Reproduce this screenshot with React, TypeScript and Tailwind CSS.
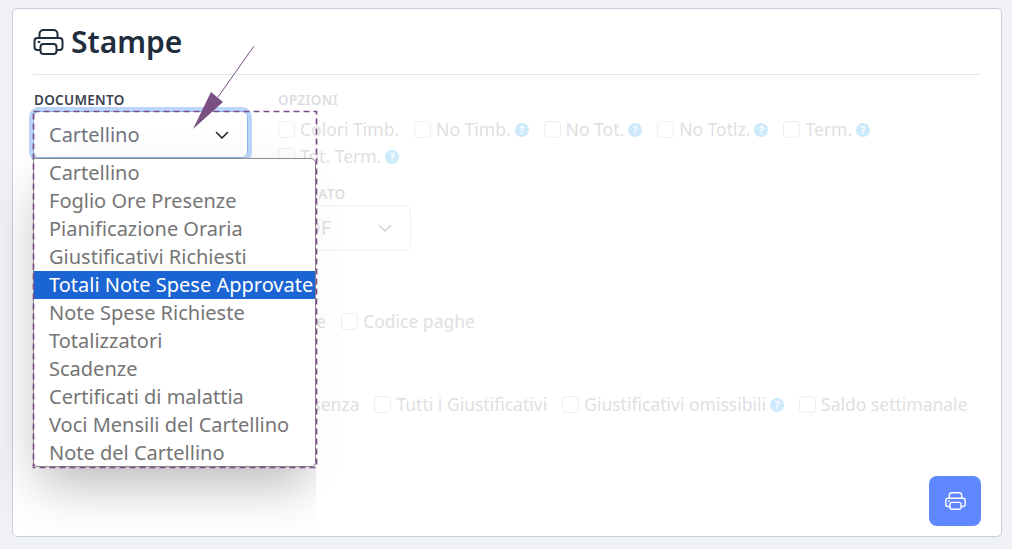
const font = "font-['Noto_Sans',sans-serif]";

const documents = [
  "Cartellino",
  "Foglio Ore Presenze",
  "Pianificazione Oraria",
  "Giustificativi Richiesti",
  "Totali Note Spese Approvate",
  "Note Spese Richieste",
  "Totalizzatori",
  "Scadenze",
  "Certificati di malattia",
  "Voci Mensili del Cartellino",
  "Note del Cartellino",
];

const PrinterIcon = ({ className }: { className: string }) => (
  <svg viewBox="0 0 30 26" fill="none" stroke="currentColor" strokeWidth="2" className={className}>
    <path d="M6 9V5a4 4 0 0 1 4-4h10a4 4 0 0 1 4 4v4" />
    <path d="M7 21H4a3 3 0 0 1-3-3v-6a3 3 0 0 1 3-3h22a3 3 0 0 1 3 3v6a3 3 0 0 1-3 3h-3" />
    <rect x="7" y="15" width="16" height="10" rx="3" />
    <path d="M5 13h1" strokeLinecap="round" />
  </svg>
);

const Chevron = ({ className }: { className: string }) => (
  <svg viewBox="0 0 16 16" fill="none" stroke="currentColor" strokeWidth="1.6" strokeLinecap="round" strokeLinejoin="round" className={className}>
    <path d="M2.5 5.5 8 11l5.5-5.5" />
  </svg>
);

const Help = () => (
  <span className="ml-[4px] flex size-[14px] items-center justify-center rounded-full bg-[#cdeafd] text-[10px] font-bold leading-none text-white">
    ?
  </span>
);

const Check = ({ label, help, className }: { label: string; help?: boolean; className?: string }) => (
  <label className={`flex h-[27px] items-center text-[17.5px] text-[#dfdfe3] ${className ?? ""}`}>
    <span className="mr-[5px] size-[17px] rounded-[4px] border border-[#eeeef1] bg-white" />
    {label}
    {help && <Help />}
  </label>
);

const SectionLabel = ({ children, dim }: { children: string; dim?: boolean }) => (
  <div className={`text-[13.5px] font-semibold uppercase leading-[17px] tracking-[0.3px] ${dim ? "text-[#dedee2]" : "text-[#3b4250]"}`}>
    {children}
  </div>
);

const DocumentDropdown = () => (
  <div className="absolute left-0 top-[66px] z-10 w-[283px] shadow-[0_20px_40px_rgba(0,0,0,0.03)]">
    <ul className="h-[309px] overflow-hidden rounded-b-[5px] rounded-tr-[5px] border border-[#8a8a8a] bg-white shadow-[0_25px_50px_-8px_rgba(0,0,0,0.25)] [clip-path:inset(-80px_0_-80px_-80px)]">
      {documents.map((doc) => (
        <li
          key={doc}
          className={`-mx-px h-[28px] whitespace-nowrap pl-[16px] text-[20px] leading-[28px] ${
            doc === "Totali Note Spese Approvate" ? "bg-[#1a64d4] text-white" : "text-[#757575]"
          }`}
        >
          {doc}
        </li>
      ))}
    </ul>
  </div>
);

export default function App() {
  return (
    <div className={`${font} h-[549px] w-[1012px] overflow-hidden bg-[#eff1f7] pb-[12px] pl-[12px] pr-[10px] pt-[8px]`}>
      <div className="relative flex h-full flex-col rounded-[5px] border border-[#c9cede] bg-white px-[20px]">
        <div className="flex h-[66px] items-center gap-[7px] border-b border-[#e6e7ea]">
          <PrinterIcon className="h-[26px] w-[31px] text-[#1f2d3d]" />
          <h1 className="text-[30px] font-semibold leading-none text-[#1f2d3d]">Stampe</h1>
        </div>

        <div className="relative mt-[17px] flex">
          <div className="w-[245px] pl-[1px]">
            <SectionLabel>Documento</SectionLabel>
            <div className="-ml-px mt-[2px] flex h-[47px] w-[215px] items-center justify-between rounded-[6px] border border-[#8fb5ee] pl-[15px] pr-[17px] text-[20px] text-[#6f7380] shadow-[0_0_0_4px_#bcd6fb]">
              Cartellino
              <Chevron className="size-[16px] text-[#222222]" />
            </div>
          </div>
          <div className="flex-1">
            <SectionLabel dim>Opzioni</SectionLabel>
            <div className="mt-[7px] flex flex-wrap">
              <Check label="Colori Timb." className="mr-[15px]" />
              <Check label="No Timb." help className="mr-[15px]" />
              <Check label="No Tot." help className="mr-[15px]" />
              <Check label="No Totlz." help className="mr-[15px]" />
              <Check label="Term." help />
              <div className="w-full" />
              <Check label="Tot. Term." help />
            </div>
            <div className="mt-[16px]">
              <SectionLabel dim>Formato</SectionLabel>
              <div className="mt-[2px] flex h-[46px] w-[133px] items-center justify-between rounded-[6px] border border-[#f1f1f3] pl-[15px] pr-[17px] text-[20px] text-[#dfdfe3]">
                PDF
                <Chevron className="size-[16px] text-[#d4d4d8]" />
              </div>
            </div>
          </div>
          <DocumentDropdown />
        </div>

        <div className="mt-[57px] flex pl-[221px]">
          <Check label="Nome" className="mr-[15px]" />
          <Check label="Codice paghe" />
        </div>

        <div className="mt-[56px] flex pl-[230px]">
          <Check label="Presenza" className="mr-[15px]" />
          <Check label="Tutti i Giustificativi" className="mr-[15px]" />
          <Check label="Giustificativi omissibili" help className="mr-[15px]" />
          <Check label="Saldo settimanale" />
        </div>

        <button className="mb-[10px] mt-auto flex h-[50px] w-[52px] items-center justify-center self-end rounded-[8px] bg-[#5f87ff] text-white">
          <PrinterIcon className="h-[18px] w-[21px]" />
        </button>

        <svg className="pointer-events-none absolute -left-[13px] -top-[9px] z-20 h-[549px] w-[1012px]" viewBox="0 0 1012 549" fill="none">
          <rect x="33.5" y="111.5" width="283" height="356" stroke="#7a4f85" strokeWidth="1.7" strokeDasharray="6 4" />
          <path d="M254 46 218 97" stroke="#7a5082" strokeWidth="1" />
          <path d="M193 129 211 92 223 102Z" fill="#7a5082" />
        </svg>
      </div>
    </div>
  );
}
